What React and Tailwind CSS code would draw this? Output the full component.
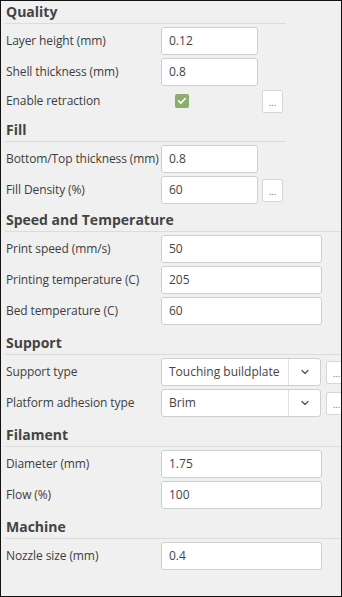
import { ChevronDown, Check } from "lucide-react";

const font = { fontFamily: '"Open Sans", "Noto Sans", sans-serif' };

function Header({ title, mt = "", wide = false }) {
  return (
    <div
      className={`h-[23px] border-b border-[#dcdcdc] pl-[1px] pt-[1px] text-[14px] font-bold leading-[19px] text-[#444] ${mt} ${
        wide ? "w-[340px]" : "w-[281px]"
      }`}
    >
      {title}
    </div>
  );
}

function Label({ children }) {
  return (
    <div className="w-[156px] shrink-0 whitespace-nowrap pl-[1px] text-[12px] tracking-[-0.1px] text-[#3d3d3d]">
      {children}
    </div>
  );
}

function Field({ value, wide = false }) {
  return (
    <div
      className={`flex h-[28px] items-center rounded-[3px] border border-[#cfcfcf] bg-white pl-[7px] text-[12px] text-[#444] ${
        wide ? "w-[161px]" : "w-[97px]"
      }`}
    >
      {value}
    </div>
  );
}

function More() {
  return (
    <div className="flex h-[23px] w-[21px] shrink-0 items-center justify-center rounded-[2px] border border-[#d6d6d6] bg-white pt-[3px] text-[9px] text-[#666]">
      ...
    </div>
  );
}

function Row({ label, children }) {
  return (
    <div className="flex h-[28px] items-center">
      <Label>{label}</Label>
      {children}
    </div>
  );
}

function Select({ value }) {
  return (
    <div className="flex h-[28px] w-[160px] shrink-0 items-center rounded-[3px] border border-[#cfcfcf] bg-white text-[12px] text-[#444]">
      <div className="flex-1 pl-[7px]">{value}</div>
      <div className="flex h-full w-[32px] items-center justify-center border-l border-[#e2e2e2]">
        <ChevronDown size={12} strokeWidth={2.5} className="text-[#555]" />
      </div>
    </div>
  );
}

export default function App() {
  return (
    <div
      className="h-[597px] w-[342px] overflow-hidden border border-[#111] bg-[#f0f0f0] pl-[4px]"
      style={font}
    >
      <Header title="Quality" />
      <div className="flex flex-col gap-[3px] pt-[3px]">
        <Row label="Layer height (mm)">
          <Field value="0.12" />
        </Row>
        <Row label="Shell thickness (mm)">
          <Field value="0.8" />
        </Row>
        <div className="flex h-[24px] items-center">
          <Label>Enable retraction</Label>
          <div className="w-[101px] shrink-0">
            <div className="ml-[14px] flex h-[14px] w-[14px] items-center justify-center rounded-[2px] bg-[#8cad6b]">
              <Check size={10} strokeWidth={4} className="text-white" />
            </div>
          </div>
          <More />
        </div>
      </div>

      <Header title="Fill" mt="mt-[6px]" />
      <div className="flex flex-col gap-[3px] pt-[3px]">
        <Row label="Bottom/Top thickness (mm)">
          <Field value="0.8" />
        </Row>
        <Row label="Fill Density (%)">
          <Field value="60" />
          <div className="ml-[4px]">
            <More />
          </div>
        </Row>
      </div>

      <Header title="Speed and Temperature" mt="mt-[5px]" wide />
      <div className="flex flex-col gap-[3px] pt-[3px]">
        <Row label="Print speed (mm/s)">
          <Field value="50" wide />
        </Row>
        <Row label="Printing temperature (C)">
          <Field value="205" wide />
        </Row>
        <Row label="Bed temperature (C)">
          <Field value="60" wide />
        </Row>
      </div>

      <Header title="Support" mt="mt-[7px]" wide />
      <div className="flex flex-col gap-[3px] pt-[3px]">
        <Row label="Support type">
          <Select value="Touching buildplate" />
          <div className="ml-[5px]">
            <More />
          </div>
        </Row>
        <Row label="Platform adhesion type">
          <Select value="Brim" />
          <div className="ml-[5px]">
            <More />
          </div>
        </Row>
      </div>

      <Header title="Filament" mt="mt-[7px]" wide />
      <div className="flex flex-col gap-[3px] pt-[3px]">
        <Row label="Diameter (mm)">
          <Field value="1.75" wide />
        </Row>
        <Row label="Flow (%)">
          <Field value="100" wide />
        </Row>
      </div>

      <Header title="Machine" mt="mt-[7px]" wide />
      <div className="flex flex-col gap-[3px] pt-[3px]">
        <Row label="Nozzle size (mm)">
          <Field value="0.4" wide />
        </Row>
      </div>
    </div>
  );
}
